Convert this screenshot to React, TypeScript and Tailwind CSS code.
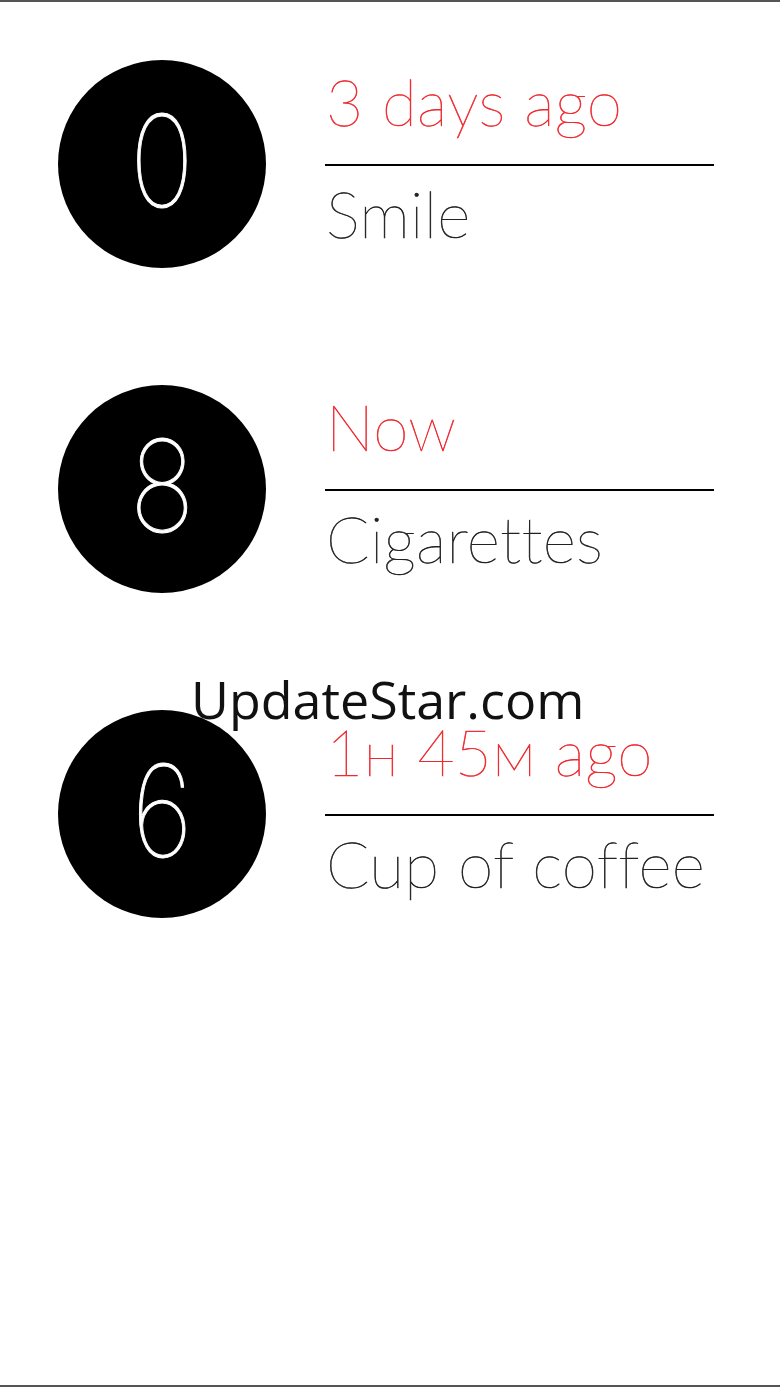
const items = [
  { count: "0", when: "3 days ago", name: "Smile" },
  { count: "8", when: "Now", name: "Cigarettes" },
  { count: "6", when: "1н 45м ago", name: "Cup of coffee" },
];

function Row({ count, when, name }: { count: string; when: string; name: string }) {
  return (
    <div className="flex items-start h-[208px]">
      <div className="w-[208px] h-[208px] rounded-full bg-black flex items-center justify-center shrink-0">
        <span className="text-white text-[128px] leading-none font-thin font-['Inter',sans-serif] -mt-[6px] scale-x-[0.85] [-webkit-text-stroke:1px_white]">
          {count}
        </span>
      </div>
      <div className="ml-[59px] mt-[10px] w-[389px] flex flex-col font-['Lato',sans-serif] font-extralight">
        <div className="text-[#ee2a30] text-[64px] leading-[64px] pl-[1px] tracking-[0.3px] [-webkit-text-stroke:0.6px_#ee2a30]">
          {when}
        </div>
        <div className="h-[2px] bg-black mt-[30px]" />
        <div className="text-[#222] text-[64px] leading-[64px] pl-[1px] mt-[16px] tracking-[0.3px] [-webkit-text-stroke:0.6px_#222]">
          {name}
        </div>
      </div>
    </div>
  );
}

export default function App() {
  return (
    <div className="relative w-[780px] h-[1387px] bg-white border-y-2 border-[#555] overflow-hidden">
      <div className="flex flex-col gap-[117px] pt-[58px] pl-[58px]">
        {items.map((it) => (
          <Row key={it.name} {...it} />
        ))}
      </div>
      <div className="absolute left-[191px] top-[677px] text-[52px] leading-[40px] text-[#111] font-['Open_Sans',sans-serif]">
        UpdateStar.com
      </div>
    </div>
  );
}
